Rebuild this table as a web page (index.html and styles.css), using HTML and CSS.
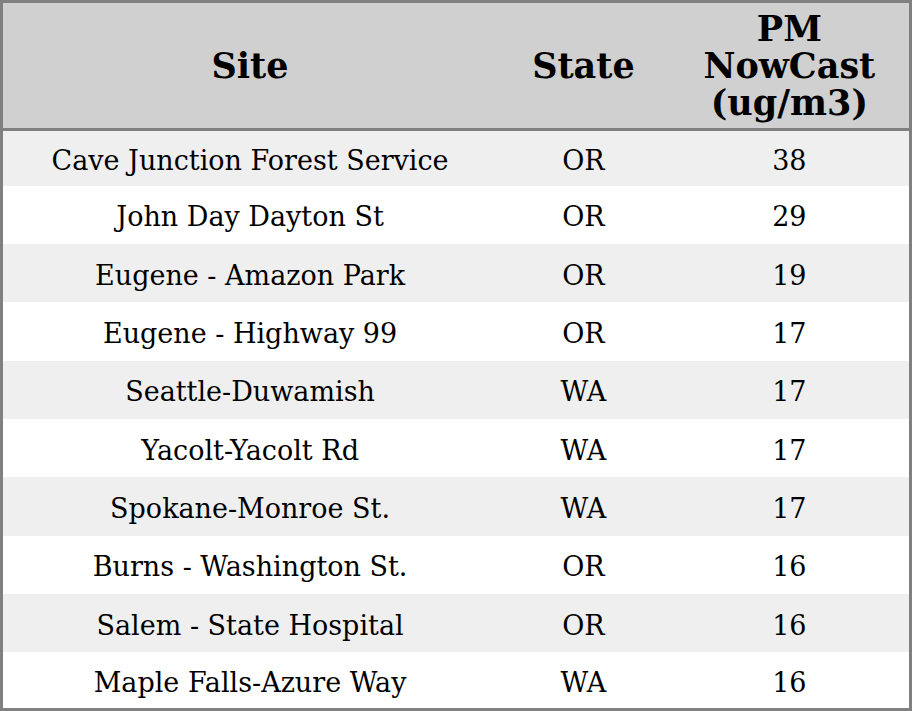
FILE: index.html
```html
<!DOCTYPE html>
<html>
<head>
<meta charset="utf-8">
<link rel="stylesheet" href="styles.css">
</head>
<body>
<table class="aq">
  <colgroup>
    <col class="c-site">
    <col class="c-state">
    <col class="c-pm">
  </colgroup>
  <thead>
    <tr class="head">
      <th>Site</th>
      <th>State</th>
      <th>PM<br>NowCast<br>(ug/m3)</th>
    </tr>
  </thead>
  <tbody>
    <tr><td>Cave Junction Forest Service</td><td>OR</td><td>38</td></tr>
    <tr><td>John Day Dayton St</td><td>OR</td><td>29</td></tr>
    <tr><td>Eugene - Amazon Park</td><td>OR</td><td>19</td></tr>
    <tr><td>Eugene - Highway 99</td><td>OR</td><td>17</td></tr>
    <tr><td>Seattle-Duwamish</td><td>WA</td><td>17</td></tr>
    <tr><td>Yacolt-Yacolt Rd</td><td>WA</td><td>17</td></tr>
    <tr><td>Spokane-Monroe St.</td><td>WA</td><td>17</td></tr>
    <tr><td>Burns - Washington St.</td><td>OR</td><td>16</td></tr>
    <tr><td>Salem - State Hospital</td><td>OR</td><td>16</td></tr>
    <tr><td>Maple Falls-Azure Way</td><td>WA</td><td>16</td></tr>
  </tbody>
</table>
</body>
</html>
```
FILE: styles.css
```css
html, body {
  margin: 0;
  padding: 0;
  background: #ffffff;
}
.aq {
  width: 912px;
  height: 711px;
  border-collapse: collapse;
  border: 3px solid #808080;
  font-family: "DejaVu Serif", serif;
  color: #000;
  table-layout: fixed;
}
.c-site { width: 494px; }
.c-state { width: 172px; }
.c-pm { width: 240px; }
.head {
  background: #d0d0d0;
  height: 128px;
}
.head th {
  font-size: 35px;
  font-weight: bold;
  line-height: 37px;
  padding: 0;
  text-align: center;
  vertical-align: middle;
  border-bottom: 3px solid #808080;
}
tbody tr { height: 58px; }
tbody tr:first-child { height: 56px; }
tbody tr:last-child { height: 57px; }
tbody tr:nth-child(odd) { background: #efefef; }
tbody tr:nth-child(even) { background: #ffffff; }
tbody td {
  font-size: 27px;
  padding: 4px 0 0;
  text-align: center;
  vertical-align: middle;
}
```
